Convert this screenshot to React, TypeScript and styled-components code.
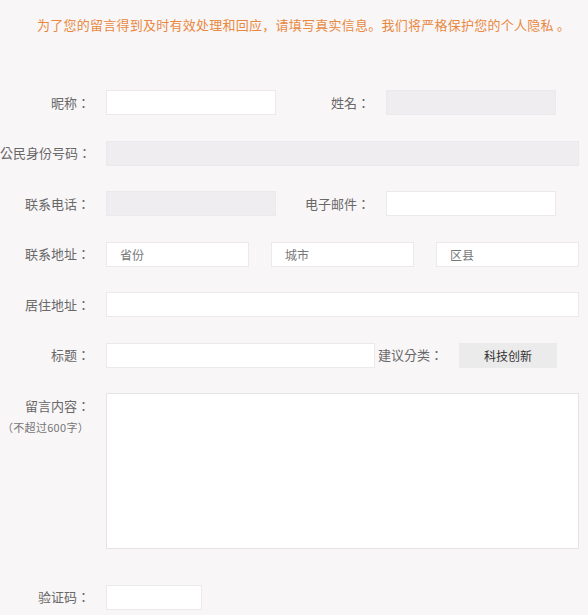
import React from 'react';
import styled, { createGlobalStyle } from 'styled-components';

const GlobalStyle = createGlobalStyle`
  html, body {
    margin: 0;
    padding: 0;
    background: #f9f6f8;
  }
  body {
    font-family: "Noto Sans CJK SC", "Noto Sans", sans-serif;
  }
`;

const labelFont = `"Noto Sans CJK TC", "Noto Sans CJK SC", sans-serif`;

const Page = styled.div`
  width: 588px;
  min-height: 615px;
  padding-top: 15px;
  box-sizing: border-box;
  background: #f9f6f8;
`;

const Notice = styled.p`
  margin: 0 0 55px 37px;
  font-size: 13px;
  line-height: 20px;
  letter-spacing: 0.25px;
  color: #e8893f;
  white-space: nowrap;
`;

const Form = styled.form`
  display: flex;
  flex-direction: column;
  gap: 25.5px;
`;

const Row = styled.div<{ $gap?: number }>`
  display: flex;
  align-items: center;
  gap: ${(p) => p.$gap ?? 0}px;
`;

const TopRow = styled.div`
  display: flex;
  align-items: flex-start;
`;

const Label = styled.label<{ $w?: number }>`
  width: ${(p) => p.$w ?? 90}px;
  flex-shrink: 0;
  margin-right: 16px;
  text-align: right;
  font-family: ${labelFont};
  font-size: 13px;
  line-height: 24px;
  color: #686868;
  white-space: nowrap;
`;

const LabelStack = styled.div`
  width: 90px;
  flex-shrink: 0;
  margin-right: 16px;
  display: flex;
  flex-direction: column;
  align-items: flex-end;
  font-family: ${labelFont};
`;

const StackTitle = styled.span`
  font-size: 13px;
  line-height: 26px;
  color: #686868;
  white-space: nowrap;
`;

const SubNote = styled.span`
  font-size: 11px;
  line-height: 16px;
  color: #777;
  margin-right: 1px;
  white-space: nowrap;
  letter-spacing: 0.3px;
`;

const Input = styled.input<{ $w: number; $disabled?: boolean }>`
  width: ${(p) => p.$w}px;
  height: 25px;
  box-sizing: border-box;
  flex-shrink: 0;
  border: 1px solid ${(p) => (p.$disabled ? '#ebe9eb' : '#ece9eb')};
  background: ${(p) => (p.$disabled ? '#efedef' : '#ffffff')};
  padding: 0 13px;
  font-family: inherit;
  font-size: 12px;
  color: #666;
  outline: none;
  &::placeholder {
    color: #777;
  }
`;

const Area = styled.textarea`
  width: 473px;
  height: 156px;
  box-sizing: border-box;
  border: 1px solid #e6e3e5;
  background: #fff;
  resize: none;
  outline: none;
  font-family: inherit;
`;

const InlineLabel = styled.span`
  margin: 0 16px 0 3px;
  font-family: ${labelFont};
  font-size: 13px;
  line-height: 24px;
  color: #686868;
  white-space: nowrap;
`;

const CategoryButton = styled.button`
  width: 98px;
  height: 25px;
  border: none;
  background: #ecebec;
  font-family: inherit;
  font-size: 12px;
  color: #333;
  padding: 0;
`;

const CaptchaRow = styled(Row)`
  margin-top: 10px;
`;

export default function App(): JSX.Element {
  return (
    <Page>
      <GlobalStyle />
      <Notice>为了您的留言得到及时有效处理和回应，请填写真实信息。我们将严格保护您的个人隐私 。</Notice>
      <Form>
        <Row>
          <Label>昵称：</Label>
          <Input $w={170} />
          <Label $w={94}>姓名：</Label>
          <Input $w={170} $disabled />
        </Row>
        <Row>
          <Label>公民身份号码：</Label>
          <Input $w={473} $disabled />
        </Row>
        <Row>
          <Label>联系电话：</Label>
          <Input $w={170} $disabled />
          <Label $w={94}>电子邮件：</Label>
          <Input $w={170} />
        </Row>
        <Row>
          <Label>联系地址：</Label>
          <Row $gap={22}>
            <Input $w={143} placeholder="省份" />
            <Input $w={143} placeholder="城市" />
            <Input $w={143} placeholder="区县" />
          </Row>
        </Row>
        <Row>
          <Label>居住地址：</Label>
          <Input $w={473} />
        </Row>
        <Row>
          <Label>标题：</Label>
          <Input $w={269} />
          <InlineLabel>建议分类：</InlineLabel>
          <CategoryButton type="button">科技创新</CategoryButton>
        </Row>
        <TopRow>
          <LabelStack>
            <StackTitle>留言内容：</StackTitle>
            <SubNote>（不超过600字）</SubNote>
          </LabelStack>
          <Area />
        </TopRow>
        <CaptchaRow>
          <Label>验证码：</Label>
          <Input $w={96} />
        </CaptchaRow>
      </Form>
    </Page>
  );
}
